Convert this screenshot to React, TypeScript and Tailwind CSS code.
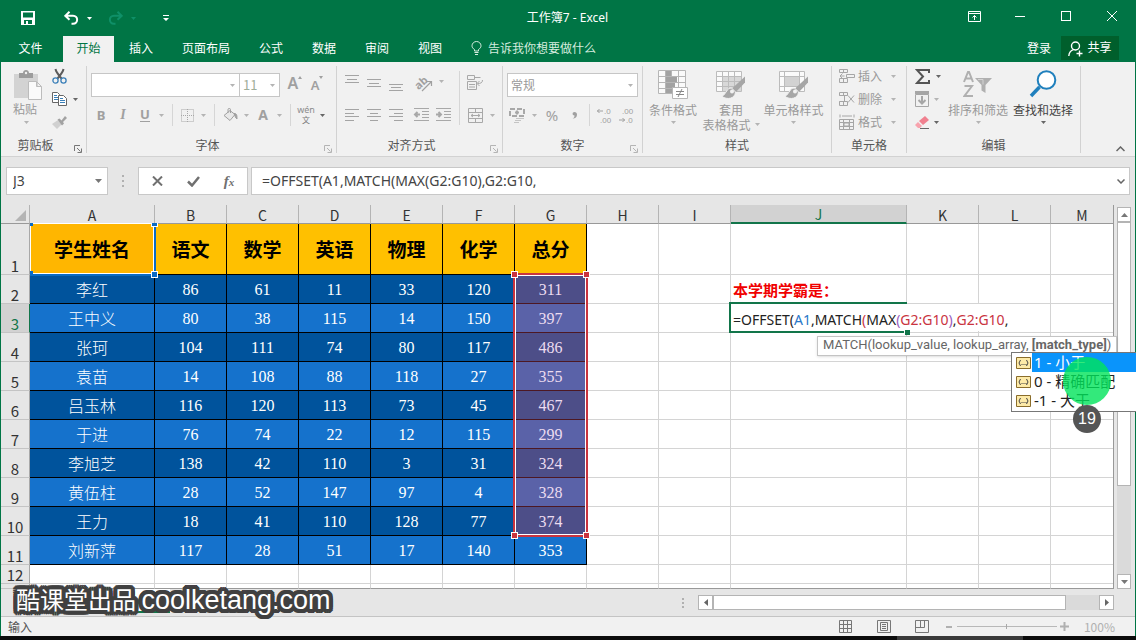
import type { ReactNode } from "react";
import clsx from "clsx";

const tabs = ["插入", "页面布局", "公式", "数据", "审阅", "视图"];

const columns = [
  { name: "A", width: "w-[125px]" },
  { name: "B", width: "w-[72px]" },
  { name: "C", width: "w-[72px]" },
  { name: "D", width: "w-[72px]" },
  { name: "E", width: "w-[72px]" },
  { name: "F", width: "w-[72px]" },
  { name: "G", width: "w-[72px]" },
  { name: "H", width: "w-[72px]" },
  { name: "I", width: "w-[72px]" },
  { name: "J", width: "w-[176px]" },
  { name: "K", width: "w-[72px]" },
  { name: "L", width: "w-[72px]" },
  { name: "M", width: "w-auto" },
];

const subjects = ["学生姓名", "语文", "数学", "英语", "物理", "化学", "总分"];

const students = [
  ["李红", 86, 61, 11, 33, 120, 311],
  ["王中义", 80, 38, 115, 14, 150, 397],
  ["张珂", 104, 111, 74, 80, 117, 486],
  ["袁苗", 14, 108, 88, 118, 27, 355],
  ["吕玉林", 116, 120, 113, 73, 45, 467],
  ["于进", 76, 74, 22, 12, 115, 299],
  ["李旭芝", 138, 42, 110, 3, 31, 324],
  ["黄伍柱", 28, 52, 147, 97, 4, 328],
  ["王力", 18, 41, 110, 128, 77, 374],
  ["刘新萍", 117, 28, 51, 17, 140, 353],
];

const formula = "=OFFSET(A1,MATCH(MAX(G2:G10),G2:G10,";

/* ---------- small shared pieces ---------- */

const Arrow = ({ className = "text-[#b4b4b4]" }: { className?: string }) => (
  <svg width="5" height="3" viewBox="0 0 5 3" className={clsx("shrink-0", className)}>
    <path d="M0 0h5L2.5 3z" fill="currentColor" />
  </svg>
);

const ArrowBtn = ({ label, className = "w-3", color }: { label: string; className?: string; color?: string }) => (
  <button aria-label={label} className={clsx("flex h-5 items-center justify-center", className)}>
    <Arrow className={color} />
  </button>
);

const IconBtn = ({ label, className = "w-[22px]", children }: { label: string; className?: string; children: ReactNode }) => (
  <button aria-label={label} className={clsx("flex h-5 shrink-0 items-center justify-center", className)}>
    {children}
  </button>
);

const Sep = ({ className = "h-[22px]" }: { className?: string }) => (
  <div className="flex w-[10px] shrink-0 justify-center">
    <div className={clsx("w-px bg-[#d6d6d6]", className)} />
  </div>
);

const Launcher = ({ dark }: { dark?: boolean }) => (
  <button aria-label="更多选项" className={clsx("absolute right-1 bottom-0", dark ? "text-[#777]" : "text-[#b4b4b4]")}>
    <svg width="8" height="8" viewBox="0 0 8 8" fill="none" stroke="currentColor">
      <path d="M.5 6V.5H6M3 3l3.5 3.5M7.500 3.500v4h-4" />
    </svg>
  </button>
);

const Group = ({ label, width, launcher, children }: { label: string; width: string; launcher?: "dark" | "light"; children: ReactNode }) => (
  <section aria-label={label} className={clsx("relative flex h-[87px] shrink-0 flex-col border-r border-[#d2d2d2]", width)}>
    <div className="flex-1">{children}</div>
    <div className="text-center leading-4 text-[#555]">{label}</div>
    {launcher && <Launcher dark={launcher === "dark"} />}
  </section>
);

const Lines = ({ rows }: { rows: [number, number, number][] }) => (
  <svg width="16" height="20" viewBox="0 0 16 20" stroke="#a4a4a4" shapeRendering="crispEdges">
    {rows.map(([x1, x2, y]) => (
      <path key={y} d={`M${x1} ${y}.5H${x2}`} />
    ))}
  </svg>
);

/* ---------- title bar and tabs ---------- */

const TitleBar = () => (
  <header className="flex h-9 items-center bg-[#007545] text-white">
    <div className="flex flex-1 items-center">
      <button aria-label="保存" className="ml-[21px]">
        <svg width="14" height="14" viewBox="0 0 14 14">
          <path fillRule="evenodd" fill="#fff" d="M0 0h14v14H0zM2 1.500v5h10v-5zM3 9v4h2v-3h2v3h4V9z" />
        </svg>
      </button>
      <button aria-label="撤消" className="ml-[29px]">
        <svg width="15" height="14" viewBox="0 0 15 14" fill="none" stroke="#fff" strokeWidth="2">
          <path d="M5.500.8 1.300 4.800l4.200 4M1.500 4.800H9c5.500 0 5.500 8 0 8H7.500" />
        </svg>
      </button>
      <ArrowBtn label="撤消列表" className="ml-1 w-3" color="text-white" />
      <button aria-label="恢复" className="ml-[13px]">
        <svg width="15" height="14" viewBox="0 0 15 14" fill="none" stroke="#0f9068" strokeWidth="2">
          <path d="m9.500.8 4.200 4-4.200 4M13.500 4.800H6c-5.500 0-5.500 8 0 8h1.500" />
        </svg>
      </button>
      <ArrowBtn label="恢复列表" className="ml-1 w-3" color="text-[#0f9068]" />
      <button aria-label="自定义快速访问工具栏" className="ml-6">
        <svg width="6" height="7" viewBox="0 0 6 7" fill="#fff">
          <path d="M0 0h6v1H0zM0 3h6L3 6z" />
        </svg>
      </button>
    </div>
    <h1 className="font-['Noto_Sans','Noto_Sans_CJK_SC',sans-serif] text-[12px]">工作簿7 - Excel</h1>
    <div className="flex flex-1 justify-end pr-px pb-1">
      <button aria-label="功能区显示选项" className="flex w-[46px] justify-center">
        <svg width="13" height="11" viewBox="0 0 13 11" fill="none" stroke="#fff">
          <path d="M.5.5h12v10H.5zM.5 2.500h12M6.500 9V4.500M4.500 6.500l2-2 2 2" />
        </svg>
      </button>
      <button aria-label="最小化" className="flex w-[46px] items-center justify-center">
        <span className="h-px w-[10px] bg-white" />
      </button>
      <button aria-label="最大化" className="flex w-[46px] items-center justify-center">
        <span className="size-[10px] border border-white" />
      </button>
      <button aria-label="关闭" className="flex w-[46px] items-center justify-center">
        <svg width="10" height="10" viewBox="0 0 10 10" stroke="#fff">
          <path d="m0 0 10 10M10 0 0 10" />
        </svg>
      </button>
    </div>
  </header>
);

const TabBar = () => (
  <nav className="flex h-[26px] items-stretch bg-[#007545] text-white">
    <button className="w-[63px] pr-0.5 pb-0.5">文件</button>
    <button className="w-[51px] bg-[#f1f1f1] pb-0.5 text-[#007545]">开始</button>
    {tabs.map((tab) => (
      <button key={tab} className="pr-[14px] pb-0.5 pl-[15px]">
        {tab}
      </button>
    ))}
    <button className="flex items-center gap-1.5 pb-0.5 pl-[15px] text-[#d5ecdf]">
      <svg width="11" height="14" viewBox="0 0 11 14" fill="none" stroke="currentColor">
        <path d="M3.500 10V8.500C1.800 7.500 1 6.200 1 4.800a4.500 4.300 0 0 1 9 0c0 1.400-.8 2.700-2.500 3.700V10zM3.500 11.500h4M4 13.500h3" />
      </svg>
      告诉我你想要做什么
    </button>
    <div className="flex-1" />
    <button className="mr-[10px] pb-0.5">登录</button>
    <button className="mr-[17px] flex h-6 w-[58px] items-center justify-center gap-1 bg-[#005f2c] pb-0.5">
      <svg width="15" height="16" viewBox="0 0 15 16" fill="none" stroke="#fff" strokeWidth="1.400" className="mt-1">
        <circle cx="7.500" cy="5" r="4" />
        <path d="M.8 15c.3-3.500 2-5.500 4.700-6.300M11.500 9.500v6M8.500 12.500h6" />
      </svg>
      共享
    </button>
  </nav>
);

/* ---------- ribbon ---------- */

const Clipboard = () => (
  <Group label="剪贴板" width="w-[86px] pr-4" launcher="dark">
    <div className="flex">
      <button className="ml-3 flex w-[30px] flex-col items-center pt-1 leading-4 text-[#999]">
        <svg width="30" height="30" viewBox="0 0 30 30">
          <path d="M1 4h24v24H1z" fill="#d3d3d3" />
          <path d="M6 3h4c0-4 6-4 6 0h4v5H6z" fill="#9c9c9c" />
          <circle cx="13" cy="3" r="1.200" fill="#f1f1f1" />
          <path d="M15.500 11.500h8l5 5v13h-13zM23.500 11.500v5h5" fill="#fafafa" stroke="#bcbcbc" />
        </svg>
        <span className="mt-px -ml-1.5">粘贴</span>
        <span className="mt-1 -ml-1">
          <Arrow />
        </span>
      </button>
      <div className="ml-2 flex flex-col items-start gap-[3px]">
        <IconBtn label="剪切" className="w-[16px]">
          <svg width="15" height="16" viewBox="0 0 15 16" fill="none">
            <path d="M3.500 1c.5 3 3 6 6 9.500M11.500 1c-.5 3-3 6-6 9.500" stroke="#5c5c5c" strokeWidth="2" />
            <circle cx="3.500" cy="12.500" r="2.600" stroke="#3a7fb8" strokeWidth="1.300" />
            <circle cx="11.500" cy="12.500" r="2.600" stroke="#3a7fb8" strokeWidth="1.300" />
          </svg>
        </IconBtn>
        <div className="flex">
          <IconBtn label="复制" className="w-[16px]">
            <svg width="15" height="14" viewBox="0 0 15 14" stroke="#666">
              <path d="M.5.5h5l2 2v8h-7z" fill="#fff" />
              <path d="M2 3.500h3M2 5.500h4M2 7.500h4" stroke="#3a7fb8" />
              <path d="M6.500 3.500h5l3 3v7h-8z" fill="#fff" />
              <path d="M8 6.500h3M8 8.500h5M8 10.500h5" stroke="#3a7fb8" />
            </svg>
          </IconBtn>
          <ArrowBtn label="复制选项" className="w-4" color="text-[#666]" />
        </div>
        <IconBtn label="格式刷" className="w-[16px]">
          <svg width="15" height="13" viewBox="0 0 15 13">
            <path d="m0 8 6-4 4 4-5 5z" fill="#d0d0d0" />
            <path d="m5.500 3.500 2-1 2 2L13 0l2 2-4 4 1 1.500-2 2z" fill="#a2a2a2" />
          </svg>
        </IconBtn>
      </div>
    </div>
  </Group>
);

const FontGroup = () => (
  <Group label="字体" width="w-[250px] pr-2" launcher="light">
    <div className="flex pt-[7px] pl-1">
      <div className="flex h-6 w-[158px] items-center border border-[#c6c6c6] bg-white pr-1">
        <select aria-label="字体名称" className="h-full flex-1 appearance-none">
          <option></option>
        </select>
        <Arrow />
      </div>
      <div className="-ml-px flex h-6 w-[41px] items-center border border-[#c6c6c6] bg-white pr-1">
        <select aria-label="字号" className="h-full w-8 appearance-none pl-[3px] text-[13px] text-[#9fae9a]">
          <option>11</option>
        </select>
        <Arrow />
      </div>
      <IconBtn label="增大字号" className="ml-1 w-[22px]">
        <span className="font-['Noto_Sans',sans-serif] text-[16px] font-semibold text-[#a0a0a0]">A</span>
        <svg width="4" height="3" viewBox="0 0 4 3" className="mb-3">
          <path d="M0 3h4L2 0z" fill="#a0a0a0" />
        </svg>
      </IconBtn>
      <IconBtn label="减小字号">
        <span className="mt-1 font-['Noto_Sans',sans-serif] text-[13px] font-semibold text-[#a0a0a0]">A</span>
        <svg width="4" height="3" viewBox="0 0 4 3" className="mb-3">
          <path d="M0 0h4L2 3z" fill="#a0a0a0" />
        </svg>
      </IconBtn>
    </div>
    <div className="flex items-center pt-[7px] pl-[3px] font-['Noto_Sans',sans-serif] text-[13px] text-[#a0a0a0]">
      <IconBtn label="加粗">
        <b>B</b>
      </IconBtn>
      <IconBtn label="倾斜">
        <i className="font-['Liberation_Serif',serif] text-[14px] font-bold">I</i>
      </IconBtn>
      <IconBtn label="下划线">
        <b className="border-b border-[#a0a0a0] leading-[13px]">U</b>
      </IconBtn>
      <ArrowBtn label="下划线选项" />
      <Sep />
      <IconBtn label="边框" className="w-[21px]">
        <svg width="13" height="13" viewBox="0 0 13 13" fill="none" stroke="#a8a8a8" strokeDasharray="1 1">
          <path d="M.5.5h12v12H.5zM6.500 0v13M0 6.500h13" />
        </svg>
      </IconBtn>
      <ArrowBtn label="边框选项" />
      <Sep />
      <IconBtn label="填充颜色">
        <svg width="15" height="14" viewBox="0 0 15 14" fill="none" stroke="#a0a0a0">
          <path d="m1 7.500 6-5 5 4-5 6zM5 5V1.500c0-1.500 2.500-1.500 2.500 0V5" fill="#e8e8e8" />
          <path d="M11 5.500c3 0 3 2 3 5.500-1.500-1-2-3-3-5.500z" fill="#a0a0a0" />
        </svg>
      </IconBtn>
      <ArrowBtn label="填充颜色选项" />
      <IconBtn label="字体颜色">
        <b className="text-[14px]">A</b>
      </IconBtn>
      <ArrowBtn label="字体颜色选项" />
      <Sep />
      <IconBtn label="拼音" className="w-[22px] flex-col">
        <span className="font-['Noto_Sans',sans-serif] text-[9px] leading-[9px] text-[#8c8c8c]">wén</span>
        <span className="font-['Noto_Sans_CJK_SC',sans-serif] text-[8px] leading-[12px] text-[#777]">文</span>
      </IconBtn>
      <ArrowBtn label="拼音选项" color="text-[#666]" />
    </div>
  </Group>
);

const AlignGroup = () => (
  <Group label="对齐方式" width="w-[166px] pr-4" launcher="light">
    <div className="flex pt-[5px] pl-1">
      <div className="flex flex-col gap-[14px]">
        <div className="flex">
          <IconBtn label="顶端对齐">
            <Lines rows={[[1, 15, 4], [3, 13, 8], [1, 15, 11]]} />
          </IconBtn>
          <IconBtn label="垂直居中">
            <Lines rows={[[1, 15, 8], [3, 13, 12], [1, 15, 15]]} />
          </IconBtn>
          <IconBtn label="底端对齐">
            <Lines rows={[[1, 15, 13], [3, 13, 16], [1, 15, 19]]} />
          </IconBtn>
          <IconBtn label="方向" className="ml-1 w-[26px]">
            <svg width="24" height="24" viewBox="0 0 24 24" fill="none" stroke="#a0a0a0" className="mt-1 shrink-0">
              <text x="3" y="16" fontSize="11" fontWeight="bold" fill="#a0a0a0" stroke="none" transform="rotate(-42 9 13)" fontFamily="Noto Sans">
                ab
              </text>
              <path d="m10 20 9-9M15 10.500h4.500V15" strokeWidth="1.200" />
            </svg>
          </IconBtn>
          <ArrowBtn label="方向选项" className="w-2" />
        </div>
        <div className="flex">
          <IconBtn label="左对齐">
            <Lines rows={[[1, 15, 4], [1, 10, 8], [1, 15, 11], [1, 10, 15]]} />
          </IconBtn>
          <IconBtn label="居中">
            <Lines rows={[[1, 15, 4], [4, 12, 8], [1, 15, 11], [4, 12, 15]]} />
          </IconBtn>
          <IconBtn label="右对齐">
            <Lines rows={[[1, 15, 4], [6, 15, 8], [1, 15, 11], [6, 15, 15]]} />
          </IconBtn>
          <IconBtn label="减少缩进量" className="ml-[3px] w-[22px]">
            <svg width="16" height="14" viewBox="0 0 16 14" stroke="#a8a8a8">
              <path d="M1 .5h15M9 3.500h7M9 6.500h7M9 9.500h7M1 12.500h15" />
              <path d="M2 6.500h5M4.500 4 2 6.500 4.500 9" strokeWidth="2" fill="none" />
            </svg>
          </IconBtn>
          <IconBtn label="增加缩进量">
            <svg width="16" height="14" viewBox="0 0 16 14" stroke="#a8a8a8">
              <path d="M1 .5h15M9 3.500h7M9 6.500h7M9 9.500h7M1 12.500h15" />
              <path d="M1 6.500h5M3.500 4 6 6.500 3.500 9" strokeWidth="2" fill="none" />
            </svg>
          </IconBtn>
        </div>
      </div>
      <Sep className="h-[54px]" />
      <div className="flex flex-col gap-[14px]">
        <IconBtn label="自动换行">
          <svg width="17" height="16" viewBox="0 0 17 16" fill="none" stroke="#a8a8a8" className="mt-1">
            <path d="M.5.5h7v4h-7zM7.500 2.500h6M.5 6.500h9v8h-9zM2 9.500h6M2 12h6M15.500 5c0 3-2 3.500-5 3.500M12.500 6l-2.500 2.500 2.500 2.500" />
          </svg>
        </IconBtn>
        <div className="flex">
          <IconBtn label="合并后居中">
            <svg width="15" height="15" viewBox="0 0 15 15" fill="none" stroke="#a8a8a8">
              <path d="M.5.5h14v14H.5zM.5 4.500h14M.5 10.500h14M7.500.5v4M7.500 10.500v4M3 7.500h9M5 6 3 7.500 5 9M10 6l2 1.500L10 9" />
            </svg>
          </IconBtn>
          <ArrowBtn label="合并选项" />
        </div>
      </div>
    </div>
  </Group>
);

const NumberGroup = () => (
  <Group label="数字" width="w-[140px]" launcher="light">
    <div className="pt-[7px] pl-1">
      <div className="flex h-6 w-[131px] items-center border border-[#c6c6c6] bg-white pr-1">
        <select aria-label="数字格式" className="h-full flex-1 appearance-none pl-[3px] text-[#999]">
          <option>常规</option>
        </select>
        <Arrow />
      </div>
    </div>
    <div className="flex items-center pt-[7px] pl-[3px] text-[#a0a0a0]">
      <IconBtn label="会计数字格式">
        <svg width="17" height="15" viewBox="0 0 17 15" fill="none" stroke="#a8a8a8">
          <path d="M1 1h14v7H1z" strokeWidth="2" strokeDasharray="5 2" />
          <path d="M8 2.500v4M6 4.500h4" strokeWidth="2" />
          <path d="M7 10.500h8M6 12.500h6M5 14.500h5" stroke="#c4c4c4" />
        </svg>
      </IconBtn>
      <ArrowBtn label="货币选项" />
      <IconBtn label="百分比样式" className="w-[24px]">
        <span className="font-['Noto_Sans',sans-serif] text-[15px]">%</span>
      </IconBtn>
      <IconBtn label="千位分隔样式" className="w-[20px]">
        <svg width="5" height="7" viewBox="0 0 5 7" fill="#a0a0a0">
          <path d="M2.500 0C0 0 0 3.500 2.500 3.500 2.500 5 2 6 .5 6.500 3.500 6.500 5 5 5 2.500 5 1 4 0 2.500 0z" />
        </svg>
      </IconBtn>
      <Sep />
      <IconBtn label="增加小数位数" className="w-[22px]">
        <svg width="20" height="22" viewBox="0 0 20 22" fill="#a0a0a0" fontFamily="Liberation Sans" fontSize="8" className="shrink-0">
          <path d="M2 7h6M4.500 5l-2 2 2 2" fill="none" stroke="#a0a0a0" />
          <text x="9" y="10">.0</text>
          <text x="5" y="19">.00</text>
        </svg>
      </IconBtn>
      <IconBtn label="减少小数位数" className="w-[22px]">
        <svg width="20" height="22" viewBox="0 0 20 22" fill="#a0a0a0" fontFamily="Liberation Sans" fontSize="8" className="shrink-0">
          <text x="5" y="10">.00</text>
          <path d="M2 16h6M5.500 14l2 2-2 2" fill="none" stroke="#a0a0a0" />
          <text x="9" y="19">.0</text>
        </svg>
      </IconBtn>
    </div>
  </Group>
);

const BrushTable = ({ header }: { header?: boolean }) => (
  <svg width="30" height="30" viewBox="0 0 30 30" fill="none" stroke="#bcbcbc">
    <path d="M.5 2.500h25v20H.5z" fill="#fafafa" />
    {header ? (
      <>
        <path d="M6 8h14v10H6z" fill="#d2d2d2" stroke="none" />
        <path d="M5.500 2.500v20M20.500 2.500v20M.5 7.500h25M.5 17.500h25" />
      </>
    ) : (
      <>
        <path d="M6 8h19v14H6z" fill="#d8d8d8" stroke="none" />
        <path d="M6.500 2.500v20M12.500 2.500v20M18.500 2.500v20M.5 7.500h25M.5 12.500h25M.5 17.500h25" />
      </>
    )}
    <path d="M29 7.500v6L20 23l-4-3.500z" fill="#a6a6a6" stroke="none" />
    <path d="M15.500 19c-5 0-4.500 5-9.500 8.500 5 3.500 13 2.500 13.500-4.500z" fill="#a6a6a6" stroke="#f1f1f1" />
    <circle cx="16" cy="22.500" r="2" fill="#f1f1f1" stroke="none" />
  </svg>
);

const StyleGroup = () => (
  <Group label="样式" width="w-[189px]">
    <div className="flex pt-[3px] pl-[3px] leading-[15px] text-[#999]">
      <button className="flex w-[54px] flex-col items-center">
        <svg width="30" height="30" viewBox="0 0 30 30" fill="none" stroke="#b6b6b6">
          <path d="M.5 1.500h27v23H.5z" fill="#fafafa" />
          <path d="M7.500 1.500v23M13.500 1.500v23M20.500 1.500v23M.5 7.500h27M.5 13.500h27M.5 19.500h27" />
          <path d="M8 2h5v5H8zM8 8h11v5H8zM8 14h9v5H8zM8 20h7v4H8z" fill="#a2a2a2" stroke="none" />
          <path d="M14.500 18.500h15v11h-15z" fill="#fff" />
          <path d="M18 22.500h8M18 25.500h8M24 20l-4 8" stroke="#888" />
        </svg>
        <span className="mt-[3px]">条件格式</span>
        <span className="mt-1">
          <Arrow />
        </span>
      </button>
      <button className="flex w-[62px] flex-col items-center">
        <BrushTable />
        <span className="mt-[3px]">套用</span>
        <span className="flex items-center gap-1 whitespace-nowrap">
          表格格式
          <Arrow />
        </span>
      </button>
      <button className="flex w-[63px] flex-col items-center whitespace-nowrap">
        <BrushTable header />
        <span className="mt-[3px]">单元格样式</span>
        <span className="mt-1">
          <Arrow />
        </span>
      </button>
    </div>
  </Group>
);

const cellActions = [
  { label: "插入", d: "M.5 1.500h8v3h-8zM4.500 1.500v3M.5 10.500h8v4h-8zM4.500 10.500v4M7.500 6.500h8v3h-8zM5.500 8H1M3.500 5.500 1 8l2.500 2.500" },
  { label: "删除", d: "M.5 1.500h8v3h-8zM4.500 1.500v3M.5 10.500h8v4h-8zM4.500 10.500v4M.5 4.500h5v6h-5M9 4.500l6 7M15 4.500l-6 7" },
  { label: "格式", d: "M1 .5v3M15 .5v3M3 2h10M.5 5.500h14v10H.5zM.5 8.500h14M.5 12.500h14M4.500 5.500v10M10.500 5.500v10M5 9h5v3H5z" },
];

const CellsGroup = () => (
  <Group label="单元格" width="w-[75px]">
    <div className="flex flex-col gap-[3px] pl-[7px] text-[#999]">
      {cellActions.map((action) => (
        <button key={action.label} className="flex h-5 items-center">
          <svg width="16" height="16" viewBox="0 0 16 16" fill="none" stroke="#a6a6a6">
            <path d={action.d} />
          </svg>
          <span className="mr-[9px] ml-[3px]">{action.label}</span>
          <Arrow />
        </button>
      ))}
    </div>
  </Group>
);

const EditGroup = () => (
  <Group label="编辑" width="w-[174px]">
    <div className="flex">
      <div className="flex flex-col gap-[3px] pl-[5px]">
        <div className="flex">
          <IconBtn label="自动求和" className="w-5">
            <svg width="15" height="15" viewBox="0 0 15 15" fill="none" stroke="#555" strokeWidth="2">
              <path d="M14 4V1H2l6 6.500L2 14h12v-3" />
            </svg>
          </IconBtn>
          <ArrowBtn label="求和选项" color="text-[#666]" />
        </div>
        <div className="flex">
          <IconBtn label="填充" className="w-5">
            <svg width="14" height="16" viewBox="0 0 14 16" fill="none" stroke="#a6a6a6">
              <path d="M.5 3.500h13v12H.5z" />
              <path d="M0 1.500h14" strokeWidth="3" />
              <path d="M7 5v7M3.500 9 7 12.500 10.500 9" strokeWidth="2" />
            </svg>
          </IconBtn>
          <ArrowBtn label="填充选项" className="w-2" />
        </div>
        <div className="flex">
          <IconBtn label="清除" className="w-5">
            <svg width="15" height="13" viewBox="0 0 15 13">
              <path d="m4 5 6-5 4 4-6 5z" fill="#f0808f" />
              <path d="m3 6 4 4-2 2H3L0 9z" fill="#f8a3ae" />
              <path d="M5 12.500h9" stroke="#666" />
            </svg>
          </IconBtn>
          <ArrowBtn label="清除选项" className="w-2" color="text-[#666]" />
        </div>
      </div>
      <button className="ml-px flex w-[66px] flex-col items-center pt-1 leading-[15px] text-[#999]">
        <svg width="30" height="28" viewBox="0 0 30 28" fill="none" stroke="#b0b0b0" strokeWidth="2">
          <path d="M1 12 5 2h1l4 10M2.500 8.500h6M1.500 16H9L1.500 26H10" />
          <path d="M12 8h17l-6.500 7v8l-4-2.500V15z" fill="#b0b0b0" stroke="none" />
          <path d="M15 9.500h5v5" stroke="#d4d4d4" strokeWidth="1" />
        </svg>
        <span className="mt-1">排序和筛选</span>
        <span className="mt-1">
          <Arrow />
        </span>
      </button>
      <button className="flex w-[64px] flex-col items-center pt-1 leading-[15px] text-[#444]">
        <svg width="28" height="28" viewBox="0 0 28 28" fill="none" stroke="#2080bd">
          <circle cx="17.500" cy="10" r="8.800" fill="#fff" strokeWidth="2" />
          <path d="m10.500 17-8.500 9" strokeWidth="3.500" />
        </svg>
        <span className="mt-1 whitespace-nowrap">查找和选择</span>
        <span className="mt-1">
          <Arrow className="text-[#666]" />
        </span>
      </button>
    </div>
  </Group>
);

const Ribbon = () => (
  <div className="flex h-[95px] border-b border-[#d2d2d2] bg-[#f1f1f1] pt-1">
    <Clipboard />
    <FontGroup />
    <AlignGroup />
    <NumberGroup />
    <StyleGroup />
    <CellsGroup />
    <EditGroup />
    <div className="flex flex-1 items-end justify-end pr-[10px] pb-1">
      <button aria-label="折叠功能区">
        <svg width="9" height="6" viewBox="0 0 9 6" fill="none" stroke="#666" strokeWidth="1.500">
          <path d="m.5 5 4-4 4 4" />
        </svg>
      </button>
    </div>
  </div>
);

/* ---------- formula bar ---------- */

const FormulaBar = () => (
  <div className="flex h-12 items-start bg-[#e6e6e6] pt-[10px] pr-[5px] pl-[5px]">
    <div className="flex h-7 w-[102px] items-center border border-[#c8c8c8] bg-white pr-[5px]">
      <input aria-label="名称框" defaultValue="J3" className="w-0 flex-1 pl-1.5 font-['Noto_Sans',sans-serif] text-[14px] text-[#444] outline-none" />
      <button aria-label="名称列表">
        <svg width="7" height="4" viewBox="0 0 7 4">
          <path d="M0 0h7L3.500 4z" fill="#777" />
        </svg>
      </button>
    </div>
    <div className="flex h-7 w-[30px] flex-col items-center justify-center gap-[3px]">
      <span className="size-[2px] bg-[#b0b0b0]" />
      <span className="size-[2px] bg-[#b0b0b0]" />
      <span className="size-[2px] bg-[#b0b0b0]" />
    </div>
    <div className="flex h-7 w-[110px] items-center border border-[#c8c8c8] bg-white text-[#707070]">
      <button aria-label="取消" className="flex w-9 justify-center">
        <svg width="11" height="10" viewBox="0 0 11 10" stroke="currentColor" strokeWidth="2">
          <path d="m1 .5 9 9M10 .5l-9 9" />
        </svg>
      </button>
      <button aria-label="输入" className="flex w-9 justify-center">
        <svg width="13" height="11" viewBox="0 0 13 11" fill="none" stroke="currentColor" strokeWidth="2.500">
          <path d="m1 5.500 4 4L12 1" />
        </svg>
      </button>
      <button aria-label="插入函数" className="w-9 font-['Liberation_Serif',serif] text-[15px] font-bold italic">
        f<span className="text-[11px]">x</span>
      </button>
    </div>
    <div className="ml-[3px] flex h-7 flex-1 items-center border border-[#c8c8c8] bg-white pr-1">
      <input aria-label="编辑栏" defaultValue={formula} className="w-0 flex-1 pl-[10px] font-['Noto_Sans',sans-serif] text-[14px] text-[#444] outline-none" />
      <button aria-label="展开编辑栏">
        <svg width="8" height="5" viewBox="0 0 8 5" fill="none" stroke="#666" strokeWidth="1.500">
          <path d="m.5.5 3.500 3.500L7.500.5" />
        </svg>
      </button>
    </div>
  </div>
);

/* ---------- sheet ---------- */

const Handle = ({ className }: { className: string }) => (
  <span className={clsx("absolute size-[7px] border border-white", className)} />
);

const RefA1 = () => (
  <div className="absolute -top-px -right-[2px] -bottom-[2px] left-0 z-10 border-r-2 border-b-2 border-[#0a6bc4]">
    <div className="h-full border border-white" />
    <span className="absolute top-0 left-0 size-[3px] bg-[#0a6bc4]" />
    <span className="absolute bottom-0 left-0 size-[3px] bg-[#0a6bc4]" />
    <span className="absolute top-0 -right-1 h-1 w-[7px] border border-t-0 border-white bg-[#0a6bc4]" />
    <Handle className="-right-1 -bottom-1 bg-[#0a6bc4]" />
  </div>
);

const RefG2G10 = () => (
  <div className="absolute -top-[2px] -right-[2px] -left-[2px] z-10 h-[264px] border-2 border-[#c9343f]">
    <div className="h-full border border-white bg-[#dc4664]/35" />
    <Handle className="-top-1 -left-1 bg-[#c9343f]" />
    <Handle className="-top-1 -right-1 bg-[#c9343f]" />
    <Handle className="-bottom-1 -left-1 bg-[#c9343f]" />
    <Handle className="-right-1 -bottom-1 bg-[#c9343f]" />
  </div>
);

const matchTypes = ["1 - 小于", "0 - 精确匹配", "-1 - 大于"];

const CellEditor = () => (
  <div className="absolute -top-[2px] -left-[2px] z-20 h-[31px] w-[178px] border-y-2 border-l-2 border-[#12754a] bg-white">
    <div className="flex h-full w-[316px] items-center bg-white pt-1 pl-0.5 text-left font-['Noto_Sans',sans-serif] text-[14px] leading-[20px] whitespace-pre text-[#222]">
      =OFFSET(<span className="text-[#2a78c8]">A1</span>,MATCH<span className="text-[#c9343f]">(</span>MAX<span className="text-[#9a5cc0]">(</span>
      <span className="text-[#c9343f]">G2:G10</span>
      <span className="text-[#9a5cc0]">)</span>,<span className="text-[#c9343f]">G2:G10</span>,
    </div>
    <span className="absolute -right-[3px] -bottom-[4px] size-[6px] border-t border-l border-white bg-[#12754a]" />

    {/* function hint */}
    <div
      role="tooltip"
      className="absolute top-8 left-[86px] h-5 border border-[#c4c4c4] bg-white px-[5px] font-['Roboto',sans-serif] text-[13px] leading-[16px] whitespace-nowrap text-[#666] shadow-sm"
    >
      MATCH(lookup_value, lookup_array, <b>[match_type]</b>)
    </div>

    {/* match type list */}
    <ul className="absolute top-12 left-[280px] w-[150px] border border-[#777] bg-white pb-px text-left font-['Noto_Sans','Noto_Sans_CJK_SC',sans-serif] text-[15px] leading-[18px] text-[#222]">
      {matchTypes.map((type, i) => (
        <li key={type} className="flex h-[19px] items-center pl-1">
          <svg width="15" height="12" viewBox="0 0 15 12" fill="none" stroke="#8a6d2b" className="mr-[1px] shrink-0">
            <path d="M.5.5h14v11H.5z" fill="#fdeaa8" />
            <path d="M4.500 3 3 6l1.500 3M10.500 3 12 6l-1.500 3M5.500 7.500h1M7.500 7.500h1M9.500 7.500h1" stroke="#444" />
          </svg>
          <span className={clsx("h-full flex-1 pl-[2px] whitespace-nowrap", i === 0 && "bg-[#0a94fb] text-white")}>{type}</span>
        </li>
      ))}
    </ul>

    {/* click marker */}
    <span className="absolute top-[53px] left-[332px] size-12 rounded-full bg-[#00e45a]/80" />
    <span className="absolute top-[101px] left-[342px] flex size-7 items-center justify-center rounded-full bg-[#555] font-['Liberation_Sans',sans-serif] text-[16px] text-white">
      19
    </span>
  </div>
);

const RowHead = ({ n, active }: { n?: number; active?: boolean }) => (
  <th
    scope="row"
    className={clsx(
      "border-r border-b border-b-[#c4c4c4] align-bottom text-[15px] leading-4 font-normal",
      active ? "border-r-[#12754a] bg-[#d2d2d2] text-[#12754a]" : "border-r-[#a8a8a8] bg-[#e6e6e6] text-[#333]"
    )}
  >
    {n}
  </th>
);

const blank = "border-r border-b border-[#d4d4d4]";

const Sheet = () => (
  <table className="w-0 flex-1 table-fixed border-separate border-spacing-0 border-r border-[#999] bg-white text-center [&_tr>*:last-child]:border-r-0">
    <colgroup>
      <col className="w-[29px]" />
      {columns.map((col) => (
        <col key={col.name} className={col.width} />
      ))}
    </colgroup>
    <thead>
      <tr className="h-[19px] text-[14px] leading-[15px] text-[#333]">
        <th aria-label="全选" className="border-r border-b border-r-[#b4b4b4] border-b-[#999] bg-[#e6e6e6] p-0">
          <svg width="11" height="11" viewBox="0 0 11 11" className="mt-0.5 ml-[14px]">
            <path d="M11 0v11H0z" fill="#b4b4b4" />
          </svg>
        </th>
        {columns.map(({ name }) => (
          <th
            key={name}
            scope="col"
            className={clsx(
              "border-r border-r-[#b4b4b4] p-0 pt-0.5 font-normal",
              name === "J" ? "border-b-2 border-b-[#12754a] bg-[#d2d2d2] text-[#12754a]" : "border-b border-b-[#999] bg-[#e6e6e6]"
            )}
          >
            {name}
          </th>
        ))}
      </tr>
    </thead>
    <tbody>
      <tr className="h-[51px]">
        <RowHead n={1} />
        {subjects.map((subject, i) => (
          <td
            key={subject}
            className={clsx("relative border-r border-b border-black text-[19px] font-bold text-black", i === 0 ? "bg-[#ffb600]" : "bg-[#ffc000]")}
          >
            {subject}
            {i === 0 && <RefA1 />}
          </td>
        ))}
        {columns.slice(7).map(({ name }) => (
          <td key={name} className={blank} />
        ))}
      </tr>
      {students.map((row, r) => (
        <tr key={r} className="h-[29px]">
          <RowHead n={r + 2} active={r === 1} />
          {row.map((value, c) => (
            <td
              key={c}
              className={clsx(
                "relative border-r border-b border-black p-0 leading-5 text-white",
                r % 2 ? "bg-[#1572cc]" : "bg-[#00539c]",
                c === 0 ? "text-[16px] font-light" : "pt-0.5 font-['Liberation_Serif',serif] text-[16px]"
              )}
            >
              {c === 6 && r < 9 ? <span className="relative z-20 text-[#ecdcf0]">{value}</span> : value}
              {r === 0 && c === 6 && <RefG2G10 />}
            </td>
          ))}
          {columns.slice(7).map(({ name }) => (
            <td key={name} className={clsx("relative p-0", blank)}>
              {name === "J" && r === 0 && (
                <span className="block pt-px pl-0.5 text-left text-[15px] leading-5 font-bold whitespace-nowrap text-[#f00000]">本学期学霸是：</span>
              )}
              {name === "J" && r === 1 && <CellEditor />}
            </td>
          ))}
        </tr>
      ))}
      <tr className="h-[19px]">
        <RowHead n={12} />
        {columns.map(({ name }) => (
          <td key={name} className={blank} />
        ))}
      </tr>
      <tr className="h-[5px]">
        <RowHead />
        {columns.map(({ name }) => (
          <td key={name} className="border-r border-b border-r-[#d4d4d4] border-b-[#999] p-0" />
        ))}
      </tr>
    </tbody>
  </table>
);

const VerticalScroll = () => (
  <div className="flex w-[21px] flex-col items-center bg-[#e6e6e6] pt-0.5 pr-[1px]">
    <button aria-label="向上滚动" className="flex h-[15px] w-[14px] items-center justify-center border border-[#b4b4b4] bg-white">
      <svg width="7" height="4" viewBox="0 0 7 4">
        <path d="M0 4h7L3.500 0z" fill="#777" />
      </svg>
    </button>
    <div className="w-[14px] flex-1 bg-[#dadada]">
      <div className="h-3/4 border border-[#b4b4b4] bg-white" />
    </div>
    <button aria-label="向下滚动" className="flex h-[15px] w-[14px] items-center justify-center border border-[#b4b4b4] bg-white">
      <svg width="7" height="4" viewBox="0 0 7 4">
        <path d="M0 0h7L3.500 4z" fill="#777" />
      </svg>
    </button>
  </div>
);

/* ---------- bottom bars ---------- */

const SheetTabs = () => (
  <div className="relative flex h-7 items-center border-b border-[#c4c4c4] bg-[#e6e6e6] pr-[21px]">
    <button className="mb-1 ml-[100px] h-6 w-[69px] self-start border-b-2 border-[#12754a] bg-white font-bold text-[#12754a]">Sheet1</button>
    <div className="flex-1" />
    <div className="mr-[14px] flex flex-col gap-[2px]">
      <span className="size-[2px] bg-[#b0b0b0]" />
      <span className="size-[2px] bg-[#b0b0b0]" />
      <span className="size-[2px] bg-[#b0b0b0]" />
    </div>
    <div className="flex h-[15px] w-[416px] bg-[#dadada]">
      <button aria-label="向左滚动" className="flex w-[15px] items-center justify-center border border-[#b4b4b4] bg-white">
        <svg width="4" height="7" viewBox="0 0 4 7">
          <path d="M4 0v7L0 3.500z" fill="#666" />
        </svg>
      </button>
      <div className="w-[353px] border border-[#b4b4b4] bg-white" />
      <div className="flex-1" />
      <button aria-label="向右滚动" className="flex w-[15px] items-center justify-center border border-[#b4b4b4] bg-white">
        <svg width="4" height="7" viewBox="0 0 4 7">
          <path d="M0 0v7l4-3.500z" fill="#666" />
        </svg>
      </button>
    </div>

    {/* watermark */}
    <div className="absolute -top-2 left-[15px] z-30 text-[24px] leading-9 whitespace-nowrap text-white [text-shadow:4px_0_#404040,-4px_0_#404040,0_4px_#404040,0_-4px_#404040,3px_3px_#404040,-3px_3px_#404040,3px_-3px_#404040,-3px_-3px_#404040,4px_2px_#404040,4px_-2px_#404040,-4px_2px_#404040,-4px_-2px_#404040,2px_4px_#404040,-2px_4px_#404040,2px_-4px_#404040,-2px_-4px_#404040,2px_0_#404040,-2px_0_#404040,0_2px_#404040,0_-2px_#404040]">
      酷课堂出品 <span className="font-['Liberation_Sans',sans-serif] text-[27px]">coolketang.com</span>
    </div>
  </div>
);

const StatusBar = () => (
  <footer className="flex h-[19px] items-center bg-[#f1f1f1] pr-5 pl-[7px] text-[#555]">
    <span>输入</span>
    <div className="flex-1" />
    <div className="flex gap-6">
      <button aria-label="普通">
        <svg width="14" height="13" viewBox="0 0 14 13" fill="none" stroke="#777">
          <path d="M.5.5h12v12H.5zM4.500.5v12M8.500.5v12M.5 4.500h12M.5 8.500h12" />
        </svg>
      </button>
      <button aria-label="页面布局">
        <svg width="14" height="13" viewBox="0 0 14 13" fill="none" stroke="#777">
          <path d="M.5.5h13v12H.5zM3.500 2.500h7v8h-7zM5 4.500h4M5 6.500h4M5 8.500h4" />
        </svg>
      </button>
      <button aria-label="分页预览">
        <svg width="14" height="13" viewBox="0 0 14 13" fill="none" stroke="#777">
          <path d="M.5.5h13v12H.5zM.5 7.500h9v-7M5.500.5v7" />
        </svg>
      </button>
    </div>
    <button aria-label="缩小" className="mr-[5px] ml-[17px] h-[2px] w-[6px] bg-[#b0b0b0]" />
    <input
      type="range"
      aria-label="缩放"
      defaultValue={50}
      className="h-px w-[100px] appearance-none bg-[#b8b8b8] [&::-webkit-slider-thumb]:h-[5px] [&::-webkit-slider-thumb]:w-px [&::-webkit-slider-thumb]:appearance-none [&::-webkit-slider-thumb]:bg-[#a8a8a8]"
    />
    <button aria-label="放大" className="ml-[3px]">
      <svg width="9" height="9" viewBox="0 0 9 9" stroke="#b0b0b0" strokeWidth="2">
        <path d="M0 4.500h9M4.500 0v9" />
      </svg>
    </button>
    <span className="ml-[15px] text-[#b0b0b0]">100%</span>
  </footer>
);

export default function App() {
  return (
    <div className="overflow-hidden bg-[#007545] font-['Noto_Sans_CJK_SC',sans-serif] text-[12px] leading-4">
      <TitleBar />
      <TabBar />
      <div className="mx-px">
        <Ribbon />
        <FormulaBar />
        <main className="flex">
          <Sheet />
          <VerticalScroll />
        </main>
        <SheetTabs />
        <StatusBar />
      </div>
      <div className="flex h-1 bg-[#0c0c0c]">
        <div className="ml-[79%] w-[126px] bg-[#3a3a3a]" />
      </div>
    </div>
  );
}
